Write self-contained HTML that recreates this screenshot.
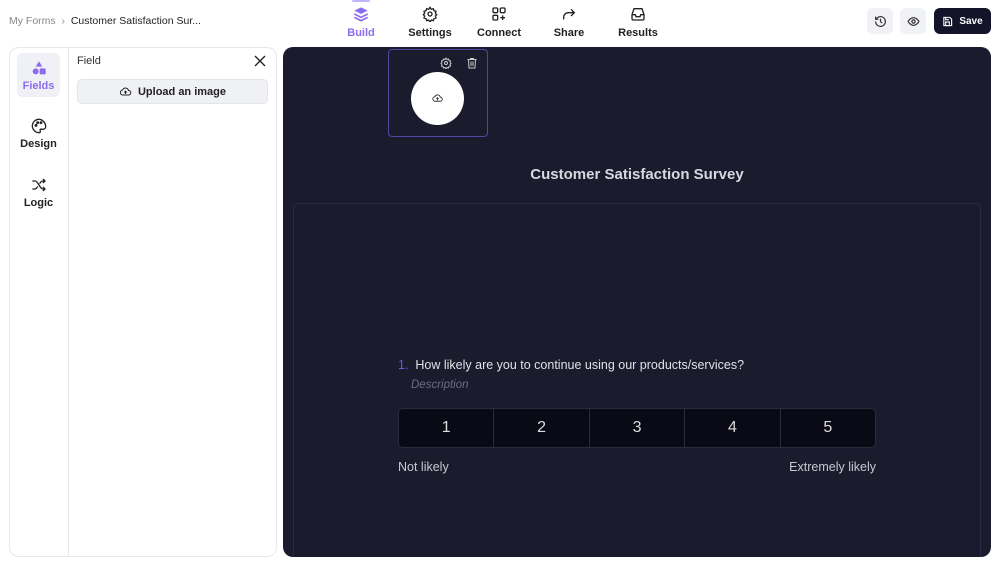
<!DOCTYPE html><html><head><style>
*{box-sizing:border-box;margin:0;padding:0}
html,body{width:1000px;height:564px;overflow:hidden}
body{background:#fff;font-family:"Liberation Sans",sans-serif;position:relative;color:#1f2937}
.abs{position:absolute}
.crumb{left:9px;top:15px;font-size:10.5px;color:#888}
.crumb b{font-weight:normal;color:#222}
.tab{position:absolute;top:6px;width:70px;text-align:center;font-size:11px;font-weight:bold;color:#222}
.tab svg{display:block;margin:0 auto 5px}
.ib{position:absolute;top:8px;width:26px;height:26px;border-radius:6px;background:#f1f2f5;display:flex;align-items:center;justify-content:center}
.cell{flex:1;border-right:1px solid #2a2b3d;display:flex;align-items:center;justify-content:center;color:#ddd;font-size:16px}
.side{position:absolute;left:17px;width:43px;text-align:center;font-size:11px;font-weight:bold;color:#222}
.side svg{display:block;margin:0 auto 4px}
</style></head><body>
<div class="abs crumb">My Forms &nbsp;›&nbsp; <b>Customer Satisfaction Sur...</b></div>
<div class="abs" style="left:352px;top:0;width:18px;height:2px;background:#c4b5fd;border-radius:1px"></div>
<div class="tab" style="left:326px;color:#8b6cf0"><svg width="16" height="16" viewBox="0 0 24 24" fill="#8b6cf0"><path d="M12 2 2 7l10 5 10-5z"/><path d="M2 12l10 5 10-5" stroke="#8b6cf0" stroke-width="2.5" fill="none"/><path d="M2 17l10 5 10-5" stroke="#8b6cf0" stroke-width="2.5" fill="none"/></svg>Build</div>
<div class="tab" style="left:395px"><svg width="16" height="16" viewBox="0 0 24 24" fill="none" stroke="#222" stroke-width="2"><circle cx="12" cy="12" r="3"/><path d="M12 2l2 3 3-1 1 3 3 1-1 3 2 2-2 2 1 3-3 1-1 3-3-1-2 3-2-3-3 1-1-3-3-1 1-3-2-2 2-2-1-3 3-1 1-3 3 1z"/></svg>Settings</div>
<div class="tab" style="left:464px"><svg width="16" height="16" viewBox="0 0 24 24" fill="none" stroke="#222" stroke-width="2"><rect x="3" y="3" width="7" height="7" rx="1.5"/><rect x="14" y="3" width="7" height="7" rx="1.5"/><rect x="3" y="14" width="7" height="7" rx="1.5"/><path d="M17.5 14v7M14 17.5h7"/></svg>Connect</div>
<div class="tab" style="left:534px"><svg width="16" height="16" viewBox="0 0 24 24" fill="none" stroke="#222" stroke-width="2"><path d="M15 5l5 5-5 5"/><path d="M20 10H11a7 7 0 0 0-7 7v3"/></svg>Share</div>
<div class="tab" style="left:603px"><svg width="16" height="16" viewBox="0 0 24 24" fill="none" stroke="#222" stroke-width="2"><path d="M3 13l3-9h12l3 9v6a2 2 0 0 1-2 2H5a2 2 0 0 1-2-2z"/><path d="M3 13h5l1 3h6l1-3h5"/></svg>Results</div>
<div class="ib" style="left:867px"><svg width="13" height="13" viewBox="0 0 24 24" fill="none" stroke="#333" stroke-width="2.2"><path d="M3 12a9 9 0 1 0 3-6.7L3 8"/><path d="M3 3v5h5"/><path d="M12 7v5l3 3"/></svg></div>
<div class="ib" style="left:900px"><svg width="13" height="13" viewBox="0 0 24 24" fill="none" stroke="#333" stroke-width="2.2"><path d="M2 12s4-7 10-7 10 7 10 7-4 7-10 7S2 12 2 12z"/><circle cx="12" cy="12" r="3"/></svg></div>
<div class="abs" style="left:934px;top:8px;width:57px;height:26px;border-radius:6px;background:#13132a;color:#fff;font-size:10px;font-weight:bold;display:flex;align-items:center;justify-content:center;gap:6px"><svg width="11" height="11" viewBox="0 0 24 24" fill="none" stroke="#fff" stroke-width="2.4"><path d="M4 3h13l4 4v14H4z"/><path d="M8 3v5h7"/><rect x="8" y="13" width="8" height="8"/></svg>Save</div>

<div class="abs" style="left:9px;top:47px;width:268px;height:510px;border:1px solid #e6e8ee;border-radius:10px"></div>
<div class="abs" style="left:68px;top:47px;width:1px;height:510px;background:#e6e8ee"></div>
<div class="abs" style="left:17px;top:53px;width:43px;height:44px;border-radius:6px;background:#f0f1f6"></div>
<div class="side" style="top:60px;color:#8b6cf0"><svg width="16" height="16" viewBox="0 0 24 24" fill="#8b6cf0"><path d="M12 2l5 8H7z"/><circle cx="7" cy="17" r="4.5"/><rect x="13" y="12.5" width="9" height="9" rx="1.5"/></svg>Fields</div>
<div class="side" style="top:118px"><svg width="16" height="16" viewBox="0 0 24 24" fill="none" stroke="#222" stroke-width="2"><path d="M12 2a10 10 0 0 0 0 20c1.5 0 2-1 2-2 0-1.5-1-2 0-3s2.5 0 4 0a4 4 0 0 0 4-4c0-6-5-11-10-11z"/><circle cx="7.5" cy="11" r="1.2"/><circle cx="10" cy="7" r="1.2"/><circle cx="15" cy="7" r="1.2"/></svg>Design</div>
<div class="side" style="top:177px"><svg width="16" height="16" viewBox="0 0 24 24" fill="none" stroke="#222" stroke-width="2"><path d="M2 6h4c5 0 7 12 12 12h3M18 15l3 3-3 3"/><path d="M2 18h4c2 0 3-2 4-4M13 10c1-2 2-4 5-4h3M18 3l3 3-3 3"/></svg>Logic</div>
<div class="abs" style="left:77px;top:55px;font-size:11px;color:#333">Field</div>
<svg class="abs" style="left:254px;top:55px" width="12" height="12" viewBox="0 0 12 12" stroke="#222" stroke-width="1.4"><path d="M1 1l10 10M11 1L1 11"/></svg>
<div class="abs" style="left:77px;top:79px;width:191px;height:25px;border:1px solid #e3e5ea;background:#f0f1f5;border-radius:5px;font-size:11px;font-weight:bold;color:#222;display:flex;align-items:center;justify-content:center;gap:6px"><svg width="13" height="12" viewBox="0 0 24 24" fill="none" stroke="#222" stroke-width="2"><path d="M7 18a5 5 0 0 1-.5-10A6 6 0 0 1 18 9a4.5 4.5 0 0 1 0 9z"/><path d="M12 16v-5M9.5 13l2.5-2.5 2.5 2.5"/></svg>Upload an image</div>

<div class="abs" style="left:283px;top:47px;width:708px;height:510px;background:#1b1b2e;border-radius:10px"></div>
<div class="abs" style="left:293px;top:203px;width:688px;height:354px;border:1px solid #2a2a48;border-bottom:0;border-radius:5px 5px 0 0"></div>
<div class="abs" style="left:388px;top:49px;width:100px;height:88px;border:1px solid #5046a8;border-radius:4px"></div>
<svg class="abs" style="left:440px;top:57px" width="12" height="12" viewBox="0 0 24 24" fill="none" stroke="#ccc" stroke-width="2"><circle cx="12" cy="12" r="3"/><path d="M12 2l2 3 3-1 1 3 3 1-1 3 2 2-2 2 1 3-3 1-1 3-3-1-2 3-2-3-3 1-1-3-3-1 1-3-2-2 2-2-1-3 3-1 1-3 3 1z"/></svg>
<svg class="abs" style="left:466px;top:57px" width="12" height="12" viewBox="0 0 24 24" fill="none" stroke="#ccc" stroke-width="2"><path d="M3 5h18M9 5V3h6v2M5 5l1 17h12l1-17M10 9v9M14 9v9"/></svg>
<div class="abs" style="left:411px;top:72px;width:53px;height:53px;border-radius:50%;background:#fff"></div>
<svg class="abs" style="left:431px;top:93px" width="13" height="11" viewBox="0 0 24 24" fill="none" stroke="#333" stroke-width="2"><path d="M7 18a5 5 0 0 1-.5-10A6 6 0 0 1 18 9a4.5 4.5 0 0 1 0 9z"/><path d="M12 16v-5M9.5 13l2.5-2.5 2.5 2.5"/></svg>
<div class="abs" style="left:283px;top:166px;width:708px;text-align:center;font-size:15px;font-weight:bold;color:#d8d8e0">Customer Satisfaction Survey</div>
<div class="abs" style="left:398px;top:358px;font-size:12.5px;color:#e0e0e6;white-space:nowrap"><span style="color:#6d5cd8">1.</span>&nbsp; How likely are you to continue using our products/services?</div>
<div class="abs" style="left:411px;top:379px;font-size:11.5px;font-style:italic;color:#6b6c80">Description</div>
<div class="abs" style="left:398px;top:408px;width:478px;height:40px;background:#0a0a16;border:1px solid #2a2b3d;border-radius:5px;display:flex;overflow:hidden"><div class="cell">1</div><div class="cell">2</div><div class="cell">3</div><div class="cell">4</div><div class="cell" style="border:0">5</div></div>
<div class="abs" style="left:398px;top:460px;font-size:12.5px;color:#c8c8d0">Not likely</div>
<div class="abs" style="left:776px;top:460px;width:100px;text-align:right;font-size:12.5px;color:#c8c8d0;white-space:nowrap">Extremely likely</div>
</body></html>
